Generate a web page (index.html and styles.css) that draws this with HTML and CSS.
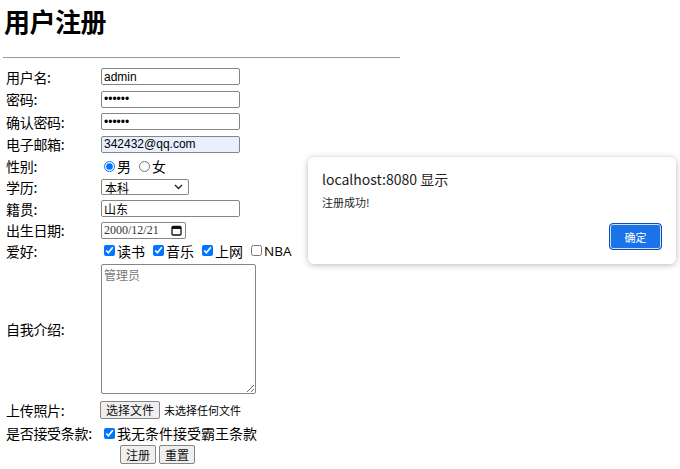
FILE: index.html
```html
<!DOCTYPE html>
<html lang="zh">
<head>
<meta charset="utf-8">
<title>用户注册</title>
<link rel="stylesheet" href="styles.css">
</head>
<body>
<h1 class="title">用户注册</h1>
<hr class="rule">
<form class="form">
  <div class="lbl">用户名:</div>
  <div class="cell"><input class="txt" type="text" value="admin"></div>
  <div class="lbl">密码:</div>
  <div class="cell"><input class="txt" type="password" value="123456"></div>
  <div class="lbl">确认密码:</div>
  <div class="cell"><input class="txt" type="password" value="123456"></div>
  <div class="lbl">电子邮箱:</div>
  <div class="cell"><input class="txt auto" type="text" value="342432@qq.com"></div>
  <div class="lbl">性别:</div>
  <div class="cell opts">
    <label class="opt"><input class="rad" type="radio" name="sex" checked>男</label>
    <label class="opt"><input class="rad" type="radio" name="sex">女</label>
  </div>
  <div class="lbl">学历:</div>
  <div class="cell">
    <div class="sel"><span>本科</span>
      <svg class="chev" width="9" height="6" viewBox="0 0 9 6"><path d="M1 1 L4.5 4.5 L8 1" fill="none" stroke="#222" stroke-width="1.3"/></svg>
    </div>
  </div>
  <div class="lbl">籍贯:</div>
  <div class="cell"><input class="txt" type="text" value="山东"></div>
  <div class="lbl">出生日期:</div>
  <div class="cell">
    <div class="date"><span>2000/12/21</span>
      <svg class="cal" width="11" height="11" viewBox="0 0 11 11"><rect x="1" y="1.5" width="9" height="8.5" rx="1" fill="none" stroke="#111" stroke-width="1.3"/><rect x="1" y="1.5" width="9" height="2.5" fill="#111"/></svg>
    </div>
  </div>
  <div class="lbl">爱好:</div>
  <div class="cell opts">
    <label class="opt"><input class="chk" type="checkbox" checked>读书</label>
    <label class="opt"><input class="chk" type="checkbox" checked>音乐</label>
    <label class="opt"><input class="chk" type="checkbox" checked>上网</label>
    <label class="opt"><input class="chk" type="checkbox"><span class="latin">NBA</span></label>
  </div>
  <div class="lbl">自我介绍:</div>
  <div class="cell"><textarea class="area" placeholder="管理员"></textarea></div>
  <div class="lbl">上传照片:</div>
  <div class="cell"><span class="btn filebtn">选择文件</span><span class="nofile">未选择任何文件</span></div>
  <div class="lbl">是否接受条款:</div>
  <div class="cell opts"><label class="opt"><input class="chk" type="checkbox" checked>我无条件接受霸王条款</label></div>
  <div class="lbl"></div>
  <div class="cell btns"><span class="btn">注册</span><span class="btn">重置</span></div>
</form>

<div class="dialog">
  <div class="dtitle">localhost:8080 显示</div>
  <div class="dmsg">注册成功!</div>
  <div class="dfoot"><span class="okbtn">确定</span></div>
</div>
</body>
</html>
```

FILE: styles.css
```css
html, body {
  margin: 0;
  padding: 0;
  background: #fff;
}
body {
  font-family: "Noto Sans CJK SC", "Liberation Sans", sans-serif;
  color: #000;
  width: 680px;
  height: 469px;
  overflow: hidden;
  position: relative;
}
.title {
  margin: 0;
  padding: 4px 0 0 4px;
  font-size: 26px;
  line-height: 34px;
  font-weight: 700;
  height: 41px;
  letter-spacing: -0.5px;
}
.rule {
  margin: 12px 0 0 3px;
  width: 397px;
  border: 0;
  border-top: 1px solid #9a9a9a;
  height: 0;
}
.form {
  display: grid;
  grid-template-columns: 95px auto;
  grid-template-rows: 23px 22.5px 22.5px 22.5px 21px 21px 22px 21px 20px 136px 26px 21px 21px;
  margin-top: 7px;
  padding-left: 6px;
}
.lbl {
  font-size: 14px;
  display: flex;
  align-items: center;
  white-space: nowrap;
  letter-spacing: -0.3px;
}
.cell {
  display: flex;
  align-items: center;
  font-size: 14px;
}
.txt {
  box-sizing: border-box;
  width: 139px;
  height: 17px;
  margin: 0;
  padding: 0 2px;
  border: 1px solid #858585;
  border-radius: 2px;
  font-family: "Liberation Sans", "Noto Sans CJK SC", sans-serif;
  font-size: 12px;
  color: #000;
  background: #fff;
}
.auto {
  background: #e8f0fe;
}
.opt {
  display: flex;
  align-items: center;
  margin-right: 5px;
  font-size: 14px;
  line-height: 16px;
}
.latin {
  font-family: "Open Sans", "Liberation Sans", sans-serif;
  font-size: 13.5px;
}
.rad, .chk {
  width: 11px;
  height: 11px;
  margin: 0 2px 0 3px;
  accent-color: #0075ff;
}
.sel {
  box-sizing: border-box;
  width: 88px;
  height: 16px;
  border: 1px solid #858585;
  border-radius: 2px;
  display: flex;
  align-items: center;
  justify-content: space-between;
  padding: 0 5px 0 3px;
  font-size: 12px;
}
.chev { display: block; }
.date {
  box-sizing: border-box;
  width: 85px;
  height: 17px;
  border: 1px solid #858585;
  border-radius: 2px;
  display: flex;
  align-items: center;
  justify-content: space-between;
  padding: 0 3px 0 2px;
  font-family: "Liberation Serif", serif;
  font-size: 12px;
  color: #333;
}
.cal { display: block; }
.area {
  box-sizing: border-box;
  width: 155px;
  height: 130px;
  margin: 0;
  padding: 1px 2px;
  border: 1px solid #858585;
  border-radius: 2px;
  font-family: "Noto Sans CJK SC", serif;
  font-size: 12px;
  resize: both;
}
.area::placeholder {
  color: #777;
}
.btn {
  box-sizing: border-box;
  display: inline-flex;
  align-items: center;
  justify-content: center;
  height: 19px;
  padding: 0 5px;
  background: #efefef;
  border: 1px solid #858585;
  border-radius: 2px;
  font-size: 12px;
  color: #111;
}
.filebtn {
  margin-left: -1px;
  height: 18px;
}
.nofile {
  font-size: 11px;
  margin-left: 4px;
}
.btns {
  padding-left: 19px;
  gap: 3px;
}
.dialog {
  position: absolute;
  left: 308px;
  top: 157px;
  width: 368px;
  height: 107px;
  box-sizing: border-box;
  background: #fff;
  border-radius: 6px;
  box-shadow: 0 1px 6px rgba(0,0,0,0.28);
  padding: 13px 14px 0 14px;
}
.dtitle {
  font-size: 14px;
  line-height: 18px;
  color: #222;
}
.dmsg {
  margin-top: 7px;
  font-size: 11px;
  line-height: 14px;
  color: #222;
}
.dfoot {
  display: flex;
  justify-content: flex-end;
  margin-top: 14px;
}
.okbtn {
  box-sizing: border-box;
  width: 53px;
  height: 27px;
  display: flex;
  align-items: center;
  justify-content: center;
  background: #1a73e8;
  color: #fff;
  font-size: 11px;
  border-radius: 4px;
  border: 1px solid #0b4fb0;
  box-shadow: inset 0 0 0 1px #cfe0fb;
}
```
